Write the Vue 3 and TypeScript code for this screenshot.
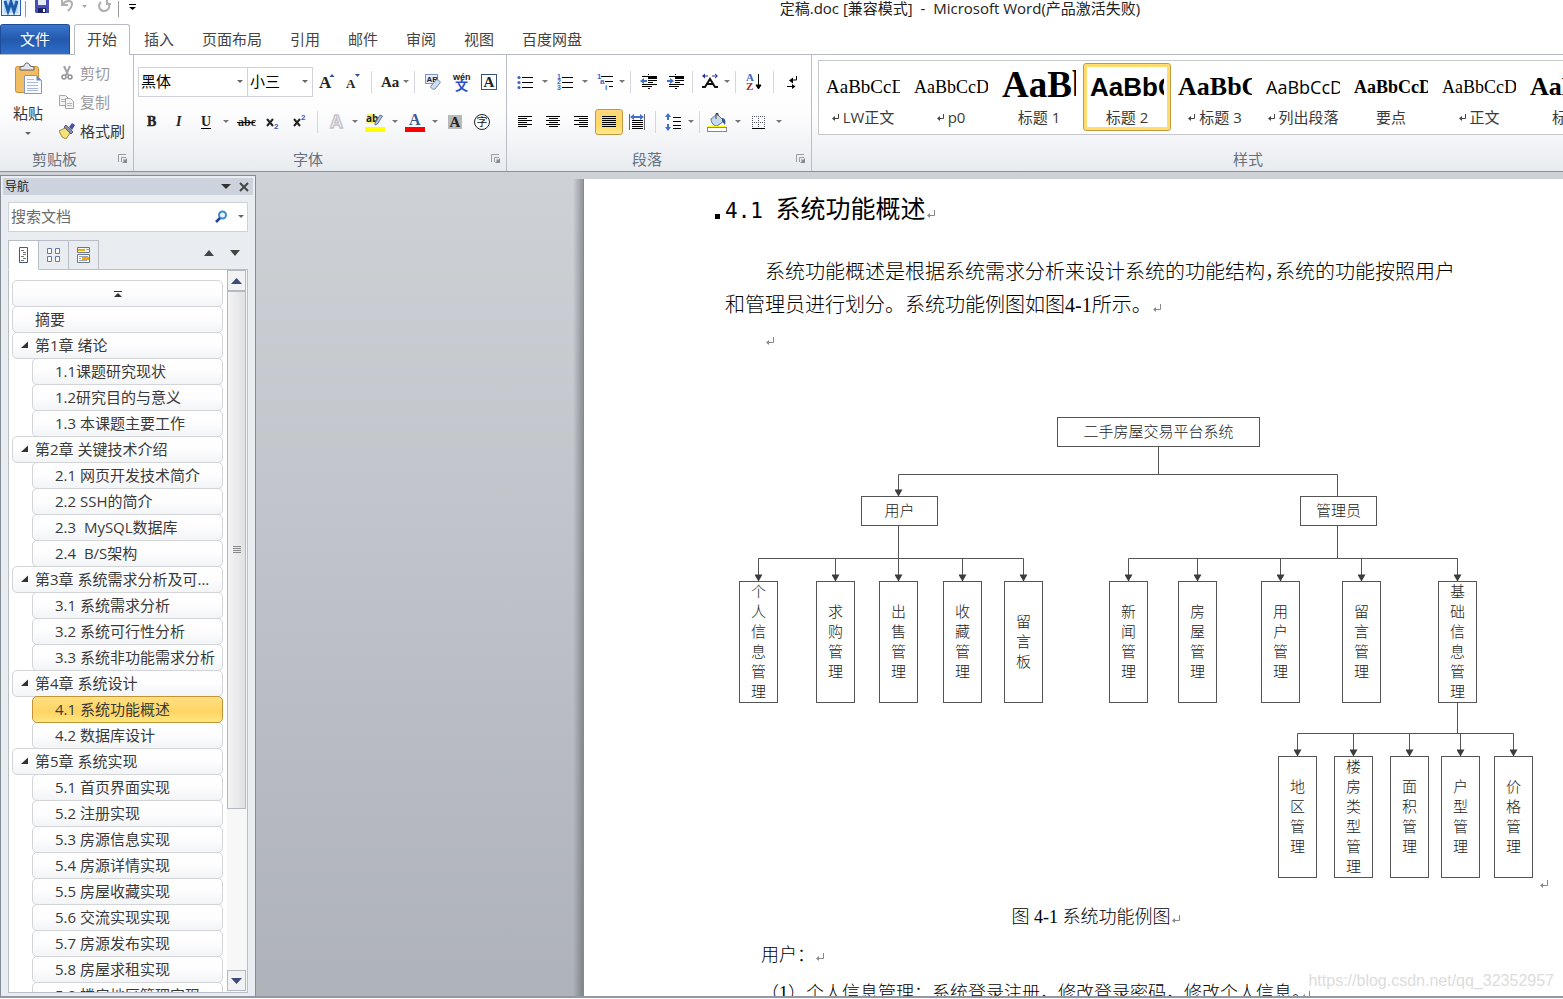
<script setup lang="ts">
import { ref } from 'vue'

interface Tool {
  icon?: string
  label?: string
  drop?: boolean
  tight?: boolean
  wide?: boolean
  active?: boolean
  sep?: boolean
}

const serif = 'font-family="Liberation Serif" fill="#222"'
const lines = (rows: number[][], color = '#000') =>
  rows.map(([x, y, w]) => `<rect x="${x}" y="${y}" width="${w}" height="1" fill="${color}"/>`).join('')

const icons: Record<string, string> = {
  grow: `<text x="4" y="18" font-size="17" font-weight="bold" ${serif}>A</text><path d="M14.500 7l2.500-3 2.500 3z" fill="#2f4f9f"/>`,
  shrink: `<text x="4" y="18" font-size="13" font-weight="bold" ${serif}>A</text><path d="M13 4h5l-2.500 3z" fill="#2f4f9f"/>`,
  case: `<text x="4" y="17" font-size="15" font-weight="bold" ${serif}>Aa</text>`,
  clear: `<rect x="4.500" y="4.500" width="12" height="9" fill="#e8eefb" stroke="#7f93c4"/><text x="5.500" y="12" font-size="8" font-weight="bold" font-family="Liberation Sans" fill="#223">AB</text><path d="M10 16l5-6c1-1 5 1 4 3l-5 6c-2 1-5-1-4-3z" fill="#d3deec" stroke="#6f87ab"/>`,
  pinyin: `<text x="3" y="10" font-size="9" font-weight="bold" font-family="Liberation Sans" fill="#222">wén</text><text x="5" y="20" font-size="13" font-weight="bold" font-family="Noto Sans CJK SC" fill="#2b50c8">文</text>`,
  charBorder: `<rect x="4.500" y="4.500" width="15" height="15" fill="#fff" stroke="#35517c"/><text x="6.500" y="17" font-size="15" font-weight="bold" ${serif}>A</text>`,
  bold: `<text x="7" y="16" font-size="14" font-weight="bold" stroke="#222" stroke-width=".4" ${serif}>B</text>`,
  italic: `<text x="9" y="16" font-size="14" font-weight="bold" font-style="italic" ${serif}>I</text>`,
  underline: `<text x="7" y="16" font-size="14" font-weight="bold" ${serif}>U</text><rect x="7" y="18" width="10" height="1"/>`,
  strike: `<text x="4" y="16" font-size="12" font-weight="bold" ${serif}>abc</text><rect x="3" y="12" width="18" height="1"/>`,
  sub: `<path d="M6 9l6 7M12 9l-6 7" stroke="#222" stroke-width="2"/><text x="13" y="19" font-size="8" font-weight="bold" font-family="Liberation Sans" fill="#2f5bb7">2</text>`,
  sup: `<path d="M6 9l6 7M12 9l-6 7" stroke="#222" stroke-width="2"/><text x="13" y="10" font-size="8" font-weight="bold" font-family="Liberation Sans" fill="#2f5bb7">2</text>`,
  effect: `<text x="7" y="18" font-size="18" font-weight="bold" font-family="Liberation Sans" fill="#fff" stroke="#c4c4cb" stroke-width="1.500">A</text>`,
  highlight: `<rect x="4" y="4" width="9" height="9" fill="#f5ee6d"/><text x="3" y="12" font-size="10" font-family="Open Sans" font-weight="bold" fill="#222">ab</text><path d="M12 13l5-8 2.500 1-5 8-2.500 1z" fill="#a9bfe2" stroke="#4c6288" stroke-width=".8"/><rect x="2" y="17" width="20" height="5" fill="#ff0"/>`,
  color: `<text x="6" y="15" font-size="16" font-weight="bold" font-family="Liberation Serif" fill="#3b5a94">A</text><rect x="2" y="17" width="20" height="5" fill="#f00"/>`,
  shade: `<rect x="5" y="5" width="14" height="14" fill="#b9b9b9"/><text x="6.500" y="17" font-size="15" font-weight="bold" ${serif}>A</text>`,
  circled: `<circle cx="12" cy="12" r="7.500" fill="#fff" stroke="#222" stroke-width="1"/><text x="6.500" y="16" font-size="11" font-family="Noto Sans CJK SC" fill="#111">字</text>`,
  bullets: lines([[9, 7, 11], [9, 12, 11], [9, 17, 11]]) + '<circle cx="6" cy="7.500" r="1.600" fill="#3c63c0"/><circle cx="6" cy="12.500" r="1.600" fill="#3c63c0"/><circle cx="6" cy="17.500" r="1.600" fill="#3c63c0"/>',
  numbers: lines([[9, 7, 11], [9, 12, 11], [9, 17, 11]]) + '<g font-size="7" font-weight="bold" font-family="Liberation Sans" fill="#3c63c0"><text x="4" y="9">1</text><text x="4" y="14">2</text><text x="4" y="20">3</text></g>',
  multi: lines([[8, 6, 12], [12, 11, 8], [16, 16, 4]]) + '<g font-size="8" font-weight="bold" font-family="Liberation Sans" fill="#3c63c0"><text x="4" y="9">1</text><text x="7" y="14">a</text><text x="12" y="20">i</text></g>',
  outdent: lines([[6, 6, 15], [12, 8, 9], [12, 10, 9], [12, 12, 5], [6, 14, 15], [6, 16, 10], [12, 18, 2]]) + '<rect x="12" y="7" width="9" height="2"/><path d="M4 11l4-3v2h3v2H8v2z" fill="#3f6fd0"/><path d="M12.500 4v16" stroke="#000" stroke-dasharray="1 1"/>',
  indent: lines([[6, 6, 15], [12, 8, 9], [12, 10, 9], [12, 12, 5], [6, 14, 15], [6, 16, 10], [12, 18, 2]]) + '<rect x="12" y="7" width="9" height="2"/><path d="M11 11l-4-3v2H4v2h3v2z" fill="#3f6fd0"/><path d="M12.500 4v16" stroke="#000" stroke-dasharray="1 1"/>',
  asian: '<path d="M4 17h3l5-8 5 8h3M8.500 14h7" fill="none" stroke="#111" stroke-width="2"/><path d="M4 6l3-2.500v5zM20 6l-3-2.500v5zM6 5.500h4v1H6zM14 5.500h4v1h-4z" fill="#22309a"/>',
  sort: `<g font-family="Liberation Serif" font-weight="bold" font-size="11"><text x="4" y="11" fill="#3c63c0">A</text><text x="4" y="20" fill="#9b3030">Z</text></g><path d="M16.500 4v14M14 15l2.500 4 2.500-4z" fill="#000" stroke="#000"/>`,
  marks: '<path d="M16.500 6v4H11M7 16.500h5" fill="none" stroke="#000"/><path d="M9 10.500l4-3v6zM12 14l3.500 2.500L12 19z"/>',
  left: lines([[5, 6, 14], [5, 8, 9], [5, 10, 14], [5, 12, 9], [5, 14, 14], [5, 16, 9]]),
  center: lines([[5, 6, 14], [8, 8, 9], [5, 10, 14], [8, 12, 9], [5, 14, 14], [8, 16, 9]]),
  right: lines([[5, 6, 14], [10, 8, 9], [5, 10, 14], [10, 12, 9], [5, 14, 14], [10, 16, 9]]),
  justify: lines([[5, 6, 14], [5, 8, 14], [5, 10, 14], [5, 12, 14], [5, 14, 14], [5, 16, 14]]),
  distribute: lines([[7, 10, 11], [7, 12, 11], [7, 14, 11], [7, 16, 11], [7, 18, 11]]) + '<path d="M4.500 4v16M19.500 4v16" stroke="#667"/><path d="M5 7l4-3v2h6V4l4 3-4 3V8H9v2z" fill="#3f6fd0"/>',
  spacing: lines([[12, 7, 8], [12, 11, 8], [12, 15, 8], [12, 18, 8]]) + '<path d="M7 3l3 4H8v3H6V7H4zM7 21l3-4H8v-3H6v3H4z" fill="#3f6fd0"/>',
  bucket: '<path d="M6 9l6-5 7 7-7 5c-3 0-6-3-6-7z" fill="#c9d8ee" stroke="#55729f"/><path d="M11 9V3.500h2V6" fill="none" stroke="#444"/><path d="M17 8c3 0 4 3 3 7l-3-4z" fill="#2c5688"/><rect x="3" y="16" width="17" height="1" fill="#ff0"/><rect x="2.500" y="17.500" width="19" height="4" fill="#fff" stroke="#888"/>',
  borders: '<path d="M6.500 6v12M12.500 6v12M18.500 6v12M6 6.500h13M6 12.500h13" stroke="#556" stroke-dasharray="1 1"/><rect x="6" y="18" width="13" height="1"/>',
}

const sep: Tool = { sep: true }
const fontTop: Tool[] = [
  { icon: 'grow', label: '增大字体' },
  { icon: 'shrink', label: '缩小字体' },
  sep,
  { icon: 'case', label: '更改大小写', drop: true, tight: true },
  sep,
  { icon: 'clear', label: '清除格式', wide: true },
  { icon: 'pinyin', label: '拼音指南' },
  { icon: 'charBorder', label: '字符边框' },
]
const fontBottom: Tool[] = [
  { icon: 'bold', label: '加粗' },
  { icon: 'italic', label: '倾斜' },
  { icon: 'underline', label: '下划线', drop: true },
  { icon: 'strike', label: '删除线' },
  { icon: 'sub', label: '下标' },
  { icon: 'sup', label: '上标' },
  sep,
  { icon: 'effect', label: '文本效果', drop: true },
  { icon: 'highlight', label: '突出显示', drop: true },
  { icon: 'color', label: '字体颜色', drop: true },
  { icon: 'shade', label: '字符底纹' },
  { icon: 'circled', label: '带圈字符' },
]
const paraTop: Tool[] = [
  { icon: 'bullets', label: '项目符号', drop: true },
  { icon: 'numbers', label: '编号', drop: true },
  { icon: 'multi', label: '多级列表', drop: true, tight: true },
  sep,
  { icon: 'outdent', label: '减少缩进量' },
  { icon: 'indent', label: '增加缩进量' },
  sep,
  { icon: 'asian', label: '中文版式', drop: true, tight: true },
  sep,
  { icon: 'sort', label: '排序', wide: true },
  sep,
  { icon: 'marks', label: '显示编辑标记', wide: true },
]
const paraBottom: Tool[] = [
  { icon: 'left', label: '左对齐' },
  { icon: 'center', label: '居中' },
  { icon: 'right', label: '右对齐' },
  { icon: 'justify', label: '两端对齐', active: true },
  { icon: 'distribute', label: '分散对齐' },
  sep,
  { icon: 'spacing', label: '行距', drop: true, tight: true },
  sep,
  { icon: 'bucket', label: '底纹', drop: true },
  { icon: 'borders', label: '边框', drop: true },
]
const toolRows = { font: [fontTop, fontBottom], para: [paraTop, paraBottom] }

const tabs = ['开始', '插入', '页面布局', '引用', '邮件', '审阅', '视图', '百度网盘']
const currentTab = ref('开始')

const styles = [
  { name: 'LW正文', mark: true, look: 'roman-l' },
  { name: 'p0', mark: true, look: 'roman' },
  { name: '标题 1', mark: false, look: 'h1' },
  { name: '标题 2', mark: false, look: 'h2' },
  { name: '标题 3', mark: true, look: 'h3' },
  { name: '列出段落', mark: true, look: 'sans' },
  { name: '要点', mark: false, look: 'strong' },
  { name: '正文', mark: true, look: 'roman' },
  { name: '标题', mark: false, look: 'h3' },
]
const currentStyle = ref('标题 2')

const outline = [
  { t: '摘要', level: 1 },
  { t: '第1章 绪论', level: 1, open: true },
  { t: '1.1课题研究现状', level: 2 },
  { t: '1.2研究目的与意义', level: 2 },
  { t: '1.3 本课题主要工作', level: 2 },
  { t: '第2章 关键技术介绍', level: 1, open: true },
  { t: '2.1 网页开发技术简介', level: 2 },
  { t: '2.2 SSH的简介', level: 2 },
  { t: '2.3  MySQL数据库', level: 2 },
  { t: '2.4  B/S架构', level: 2 },
  { t: '第3章 系统需求分析及可...', level: 1, open: true },
  { t: '3.1 系统需求分析', level: 2 },
  { t: '3.2 系统可行性分析', level: 2 },
  { t: '3.3 系统非功能需求分析', level: 2 },
  { t: '第4章 系统设计', level: 1, open: true },
  { t: '4.1 系统功能概述', level: 2 },
  { t: '4.2 数据库设计', level: 2 },
  { t: '第5章 系统实现', level: 1, open: true },
  { t: '5.1 首页界面实现', level: 2 },
  { t: '5.2 注册实现', level: 2 },
  { t: '5.3 房源信息实现', level: 2 },
  { t: '5.4 房源详情实现', level: 2 },
  { t: '5.5 房屋收藏实现', level: 2 },
  { t: '5.6 交流实现实现', level: 2 },
  { t: '5.7 房源发布实现', level: 2 },
  { t: '5.8 房屋求租实现', level: 2 },
  { t: '5.9 楼房地区管理实现', level: 2 },
]
const currentHeading = ref('4.1 系统功能概述')
const query = ref('')

// Module chart: horizontal boxes, then the vertical ones grouped by the row they hang from.
const wideNodes = [
  { t: '二手房屋交易平台系统', x: 332, y: 7, w: 202 },
  { t: '用户', x: 136, y: 86, w: 76 },
  { t: '管理员', x: 575, y: 86, w: 76 },
]
const tallNodes = [
  { t: '个人信息管理', cx: 33, y: 171 },
  { t: '求购管理', cx: 110, y: 171 },
  { t: '出售管理', cx: 173, y: 171 },
  { t: '收藏管理', cx: 237, y: 171 },
  { t: '留言板', cx: 298, y: 171 },
  { t: '新闻管理', cx: 403, y: 171 },
  { t: '房屋管理', cx: 472, y: 171 },
  { t: '用户管理', cx: 555, y: 171 },
  { t: '留言管理', cx: 636, y: 171 },
  { t: '基础信息管理', cx: 732, y: 171 },
  { t: '地区管理', cx: 572, y: 346 },
  { t: '楼房类型管理', cx: 628, y: 346 },
  { t: '面积管理', cx: 684, y: 346 },
  { t: '户型管理', cx: 735, y: 346 },
  { t: '价格管理', cx: 788, y: 346 },
]
const links =
  'M433 35V64M173 86V64H612V86M173 115V148M612 115V148M33 148H298M403 148H732M732 292V323M572 323H788'
</script>

<template>
  <div class="app">
    <header class="titlebar">
      <div class="quick">
        <svg class="q-logo" width="22" height="18" viewBox="0 0 22 18" aria-hidden="true">
          <rect x="1.500" y="-4" width="19" height="19.500" fill="#dcecfb" stroke="#2a62a8" />
          <rect x="4" y="-2" width="14" height="15" fill="#b5d6f4" />
          <path d="M5 1l3 10 3-9 3 9 3-10" fill="none" stroke="#1d5cab" stroke-width="3" />
        </svg>
        <i class="q-sep"></i>
        <button aria-label="保存">
          <svg width="16" height="18" viewBox="0 0 16 18"><path d="M1 -2h14v15H2l-1-1z" fill="#4a4fb5" /><path d="M4 -2h8v7H4z" fill="#e6ebf8" /><path d="M4 8h8v5H4z" fill="#1c2266" /><path d="M9 9h2v3H9z" fill="#fff" /></svg>
        </button>
        <button aria-label="撤消">
          <svg width="16" height="18" viewBox="0 0 16 18"><path d="M5 -1v6h6M6 4c3-4 9-4 9 0 0 3-2 5-4 7" fill="none" stroke="#b0b0b3" stroke-width="2" /></svg>
        </button>
        <svg width="8" height="18" viewBox="0 0 8 18" aria-hidden="true"><path d="M2 5h5L4.500 8z" fill="#aaa" /></svg>
        <button aria-label="恢复">
          <svg width="16" height="18" viewBox="0 0 16 18"><path d="M12 -1v5h4M6 2c-4 4-1 9 3 9s7-4 4-8" fill="none" stroke="#b0b0b3" stroke-width="2" /></svg>
        </button>
        <i class="q-sep"></i>
        <button aria-label="自定义快速访问工具栏">
          <svg width="10" height="18" viewBox="0 0 10 18"><path d="M2 4h7v1H2zM2 7h7L5.500 10z" /></svg>
        </button>
      </div>
      <h1 class="title">定稿.doc [兼容模式]&nbsp; - &nbsp;Microsoft Word(产品激活失败)</h1>
    </header>

    <nav class="tabs">
      <button class="file">文件</button>
      <button
        v-for="t in tabs"
        :key="t"
        class="tab"
        :class="{ on: t === currentTab }"
        @click="currentTab = t"
      >{{ t }}</button>
    </nav>

    <section class="ribbon">
      <div class="group">
        <div class="clip">
          <button class="paste">
            <svg width="30" height="34" viewBox="0 0 30 34">
              <rect x="2.500" y="4.500" width="23" height="26" rx="2" fill="#f0bd62" stroke="#c98f38" />
              <path d="M7 8V5l4-1c1-4 5-4 6 0l4 1v3z" fill="#e4e6ea" stroke="#5c636e" />
              <path d="M11.500 13.500h12l5 5v13h-17z" fill="#f7faff" stroke="#8397bb" />
              <path d="M23.500 13.500v5h5z" fill="#6b83b5" />
              <path d="M14 17.500h7M14 20.500h11M14 23.500h11M14 26.500h11M14 28.500h11" stroke="#a9b9d6" />
            </svg>
            <span>粘贴</span>
            <svg class="caret" width="6" height="4" viewBox="0 0 6 4"><path d="M0 0h6L3 3z" fill="#666" /></svg>
          </button>
          <div class="clip-list">
            <button class="off">
              <svg width="16" height="16" viewBox="0 0 16 16"><path d="M5 1l4 9M11 1L7 10" stroke="#a4a4a8" stroke-width="2" /><circle cx="5" cy="12" r="2" fill="none" stroke="#909094" stroke-width="1.500" /><circle cx="11" cy="12" r="2" fill="none" stroke="#909094" stroke-width="1.500" /></svg>
              剪切
            </button>
            <button class="off">
              <svg width="16" height="16" viewBox="0 0 16 16"><path d="M.5 1.500h6l3 3v7h-9z" fill="#f2f2f3" stroke="#a6a6aa" /><path d="M6.500 4.500h5l3 3v7h-8z" fill="#f2f2f3" stroke="#a6a6aa" /><path d="M2 5.500h4M2 7.500h4M8 9.500h5M8 11.500h5" stroke="#b5b5b9" /></svg>
              复制
            </button>
            <button>
              <svg width="16" height="16" viewBox="0 0 16 16"><path d="M0 8l6-3 5 5-4 6-4-2z" fill="#f3e07f" stroke="#a08a35" /><path d="M5 4l2-2 7 7-2 2z" fill="#8c8fae" stroke="#555a80" /><path d="M10 4l3-4 3 2-3 5z" fill="#4b4fa3" /></svg>
              格式刷
            </button>
          </div>
        </div>
        <div class="group-name">
          剪贴板
          <svg class="launch" width="10" height="10" viewBox="0 0 10 10"><path d="M.5 8V.5H8M3.500 8V3.500H8" fill="none" stroke="#999ca2" /><path d="M9 4v5H4l2-2-1-1 1-1 1 1z" fill="#888b92" /></svg>
        </div>
      </div>

      <div v-for="(rows, key) in toolRows" :key="key" class="group">
        <div class="tools">
          <div v-for="(row, r) in rows" :key="r" class="row" :class="{ aligned: key === 'para' && r === 1 }">
            <template v-if="key === 'font' && r === 0">
              <label class="combo family">
                <select aria-label="字体"><option>黑体</option></select>
                <svg class="caret" width="6" height="4" viewBox="0 0 6 4"><path d="M0 0h6L3 3z" fill="#666" /></svg>
              </label>
              <label class="combo size">
                <select aria-label="字号"><option>小三</option></select>
                <svg class="caret" width="6" height="4" viewBox="0 0 6 4"><path d="M0 0h6L3 3z" fill="#666" /></svg>
              </label>
            </template>
            <template v-for="(b, i) in row" :key="i">
              <i v-if="b.sep" class="sep"></i>
              <button v-else class="tool" :class="{ wide: b.wide, on: b.active }" :aria-label="b.label">
                <svg width="24" height="24" viewBox="0 0 24 24" v-html="icons[b.icon ?? '']"></svg>
              </button>
              <button v-if="b.drop" class="drop" :class="{ tight: b.tight }" :aria-label="b.label + '选项'">
                <svg width="6" height="4" viewBox="0 0 6 4"><path d="M0 0h6L3 3z" fill="#777" /></svg>
              </button>
            </template>
          </div>
        </div>
        <div class="group-name">
          {{ key === 'font' ? '字体' : '段落' }}
          <svg class="launch" width="10" height="10" viewBox="0 0 10 10"><path d="M.5 8V.5H8M3.500 8V3.500H8" fill="none" stroke="#999ca2" /><path d="M9 4v5H4l2-2-1-1 1-1 1 1z" fill="#888b92" /></svg>
        </div>
      </div>

      <div class="group styles">
        <div class="gallery">
          <button
            v-for="s in styles"
            :key="s.name"
            class="style"
            :class="{ on: s.name === currentStyle }"
            @click="currentStyle = s.name"
          >
            <span class="preview" :class="s.look">AaBbCcDd</span>
            <span class="style-name">
              <svg v-if="s.mark" width="7" height="8" viewBox="0 0 7 8"><path d="M6.500 1v4.500H2" fill="none" stroke="#444" /><path d="M0 5.500L3 3v5z" fill="#444" /></svg>
              {{ s.name }}
            </span>
          </button>
        </div>
        <div class="group-name">样式</div>
      </div>
    </section>

    <main class="work">
      <aside class="pane">
        <div class="pane-head">
          <span>导航</span>
          <button aria-label="任务窗格选项"><svg width="10" height="6" viewBox="0 0 10 6"><path d="M0 0h10L5 5z" fill="#333" /></svg></button>
          <button aria-label="关闭"><svg width="10" height="10" viewBox="0 0 10 10"><path d="M1 1l8 8M9 1L1 9" stroke="#444" stroke-width="2" /></svg></button>
        </div>
        <div class="search">
          <input v-model="query" type="text" placeholder="搜索文档" aria-label="搜索文档" />
          <button aria-label="搜索"><svg width="14" height="14" viewBox="0 0 14 14"><circle cx="8.500" cy="5" r="3.500" fill="#eaf5ff" stroke="#3b8ccc" stroke-width="2" /><path d="M6 8l-4 4" stroke="#27408f" stroke-width="2.500" /></svg></button>
          <button aria-label="搜索选项"><svg width="6" height="4" viewBox="0 0 6 4"><path d="M0 0h6L3 3z" fill="#666" /></svg></button>
        </div>
        <div class="views">
          <button class="view on" aria-label="浏览标题">
            <svg width="16" height="16" viewBox="0 0 16 16"><path d="M3.500.5h8v15h-8z" fill="#fff" stroke="#4a5878" /><path d="M5 3.500h3M7 5.500h3M7 7.500h3M5 9.500h3M7 11.500h3M5 13.500h3" stroke="#777" /></svg>
          </button>
          <button class="view" aria-label="浏览页面">
            <svg width="16" height="16" viewBox="0 0 16 16"><path d="M1.500 1.500h4v5h-4zM9.500 1.500h4v5h-4zM1.500 9.500h4v5h-4zM9.500 9.500h4v5h-4z" fill="#fff" stroke="#6478a8" /></svg>
          </button>
          <button class="view" aria-label="浏览搜索结果">
            <svg width="16" height="16" viewBox="0 0 16 16"><path d="M1.500.5h12v5h-12zM1.500 7.500h12v8h-12z" fill="#fff" stroke="#6a7590" /><path d="M2 2h7v2H2zM6 10h7v3H6z" fill="#f5a800" /><path d="M10 2.500h3M3 9.500h9M3 11.500h2M3 13.500h8" stroke="#9aa2b5" /></svg>
          </button>
          <span class="fill"></span>
          <button class="step" aria-label="上一个标题"><svg width="10" height="6" viewBox="0 0 10 6"><path d="M0 6h10L5 0z" fill="#444" /></svg></button>
          <button class="step" aria-label="下一个标题"><svg width="10" height="6" viewBox="0 0 10 6"><path d="M0 0h10L5 6z" fill="#444" /></svg></button>
        </div>
        <div class="outline">
          <div class="list">
            <button class="entry top" aria-label="跳转到开头">
              <svg width="8" height="8" viewBox="0 0 8 8"><path d="M0 1h8v1H0zM0 7h8L4 3z" fill="#333" /></svg>
            </button>
            <button
              v-for="h in outline"
              :key="h.t"
              class="entry"
              :class="{ child: h.level === 2, on: h.t === currentHeading }"
              @click="currentHeading = h.t"
            >
              <svg v-if="h.open" class="twist" width="8" height="8" viewBox="0 0 8 8"><path d="M7 .5V7H0z" fill="#333" /></svg>
              <span>{{ h.t }}</span>
            </button>
          </div>
          <div class="scroll">
            <button class="arrow" aria-label="向上滚动"><svg width="11" height="6" viewBox="0 0 11 6"><path d="M0 6h11L5.500 0z" fill="#3d4a78" /></svg></button>
            <div class="thumb"><i></i></div>
            <div class="track"></div>
            <button class="arrow" aria-label="向下滚动"><svg width="11" height="6" viewBox="0 0 11 6"><path d="M0 0h11L5.500 6z" fill="#3d4a78" /></svg></button>
          </div>
        </div>
      </aside>

      <div class="canvas">
        <article class="page">
          <h2 class="heading"><span class="half">4.1 </span>系统功能概述<svg class="ret" width="8" height="8" viewBox="0 0 8 8"><path d="M7.500 0v5.500H2" fill="none" stroke="#888" /><path d="M0 5.500L3 3v5z" fill="#888" /></svg></h2>
          <p class="body">系统功能概述是根据系统需求分析来设计系统的功能结构<span class="comma">，</span>系统的功能按照用户和管理员进行划分。系统功能例图如图<span class="half">4-1</span>所示。<svg class="ret" width="8" height="8" viewBox="0 0 8 8"><path d="M7.500 0v5.500H2" fill="none" stroke="#888" /><path d="M0 5.500L3 3v5z" fill="#888" /></svg></p>
          <p class="body"><svg class="ret" width="8" height="8" viewBox="0 0 8 8"><path d="M7.500 0v5.500H2" fill="none" stroke="#888" /><path d="M0 5.500L3 3v5z" fill="#888" /></svg></p>

          <svg class="chart" width="830" height="480" viewBox="0 0 830 480" role="img" aria-label="系统功能例图">
            <defs>
              <marker id="tip" markerWidth="10" markerHeight="9" refX="4" refY="8" markerUnits="userSpaceOnUse">
                <path d="M0 1h8L4 8z" fill="#3c3c3c" />
              </marker>
            </defs>
            <g transform="translate(.5 .5)">
              <path :d="links" class="link" />
              <path d="M173 70V86" class="link" marker-end="url(#tip)" />
              <g v-for="n in tallNodes" :key="n.t + n.y">
                <path :d="`M${n.cx} ${n.y - 23}v23`" class="link" marker-end="url(#tip)" />
                <rect class="node" :x="n.cx - 19" :y="n.y" width="38" height="121" />
                <text
                  v-for="(c, i) in n.t.split('')"
                  :key="i"
                  class="glyph"
                  :x="n.cx"
                  :y="n.y + 75 + (i - n.t.length / 2) * 20"
                >{{ c }}</text>
              </g>
              <g v-for="n in wideNodes" :key="n.t">
                <rect class="node" :x="n.x" :y="n.y" :width="n.w" height="29" />
                <text class="glyph" :x="n.x + n.w / 2" :y="n.y + 19">{{ n.t }}</text>
              </g>
            </g>
            <g transform="translate(815 470)"><path d="M7.500 0v5.500H2" fill="none" stroke="#888" /><path d="M0 5.500L3 3v5z" fill="#888" /></g>
          </svg>

          <p class="caption">图<span class="half"> 4-1 </span>系统功能例图<svg class="ret" width="8" height="8" viewBox="0 0 8 8"><path d="M7.500 0v5.500H2" fill="none" stroke="#888" /><path d="M0 5.500L3 3v5z" fill="#888" /></svg></p>
          <p class="item">用户：<svg class="ret" width="8" height="8" viewBox="0 0 8 8"><path d="M7.500 0v5.500H2" fill="none" stroke="#888" /><path d="M0 5.500L3 3v5z" fill="#888" /></svg></p>
          <p class="item">（<span class="half">1</span>）个人信息管理：系统登录注册，修改登录密码，修改个人信息<span class="comma">。</span><svg class="ret" width="8" height="8" viewBox="0 0 8 8"><path d="M7.500 0v5.500H2" fill="none" stroke="#888" /><path d="M0 5.500L3 3v5z" fill="#888" /></svg></p>
        </article>
        <span class="watermark">https://blog.csdn.net/qq_32352957</span>
      </div>
    </main>
  </div>
</template>

<style>
html,
body {
  background: #fff;
  overflow: hidden;
}
</style>

<style scoped>
.app {
  display: flex;
  flex-direction: column;
  height: 100vh;
  box-sizing: border-box;
  padding-bottom: 1px;
  overflow: hidden;
  font: 15px/20px "Open Sans", "Noto Sans CJK SC", sans-serif;
  color: #3a3a3a;
  background: #fff;
}
.app * {
  box-sizing: border-box;
}
button,
select,
input {
  margin: 0;
  padding: 0;
  border: 0;
  border-radius: 0;
  background: none;
  color: inherit;
  font: inherit;
}
svg {
  display: block;
  flex: none;
}
h1,
h2,
p {
  margin: 0;
}

.titlebar {
  display: flex;
  flex: none;
  height: 24px;
  padding-bottom: 6px;
}
.quick {
  display: flex;
  align-items: center;
  gap: 7px;
  width: 140px;
}
.quick .q-logo {
  margin-right: -4px;
}
.quick > * {
  flex: none;
}
.q-sep {
  width: 1px;
  height: 16px;
  background: #999;
  margin-right: 1px;
}
.title {
  flex: 1;
  padding-left: 217px;
  text-align: center;
  font-size: 15px;
  font-weight: 400;
  line-height: 16px;
  color: #222;
  white-space: nowrap;
}

.tabs {
  display: flex;
  flex: none;
  height: 31px;
  border-bottom: 1px solid #b7bac1;
}
.file {
  width: 70px;
  margin-right: 4px;
  padding-bottom: 2px;
  color: #fff;
  border: 1px solid #1e4d9b;
  border-bottom: 0;
  border-radius: 3px 3px 0 0;
  background: linear-gradient(#3a75cc, #2359ad 50%, #2f6fca);
}
.tab {
  padding: 0 14px;
  color: #444;
}
.tab.on {
  margin-bottom: -1px;
  padding: 0 12px 3px;
  border: 1px solid #b7bac1;
  border-bottom: 0;
  border-radius: 3px 3px 0 0;
  background: #fff;
}

.ribbon {
  display: flex;
  flex: none;
  height: 117px;
  overflow: hidden;
  border-bottom: 1px solid #8b9097;
  background: linear-gradient(#fff, #fdfdfe 50%, #e8ebef);
}
.group {
  display: flex;
  flex: none;
  flex-direction: column;
  border-right: 1px solid #babdc5;
}
.group-name {
  position: relative;
  height: 24px;
  padding-right: 24px;
  line-height: 24px;
  text-align: center;
  color: #66717f;
}
.launch {
  position: absolute;
  right: 5px;
  top: 7px;
}
.clip {
  display: flex;
  height: 92px;
  padding-right: 8px;
}
.paste {
  display: flex;
  flex-direction: column;
  align-items: center;
  width: 59px;
  padding: 7px 3px 0 0;
}
.paste span {
  margin: 7px 0 9px;
}
.clip-list {
  padding-top: 3px;
}
.clip-list button {
  display: flex;
  align-items: center;
  gap: 5px;
  height: 29px;
}
.off {
  color: #9a9a9e;
}
.tools {
  display: flex;
  flex-direction: column;
  gap: 10px;
  height: 92px;
  padding: 12px 4px 0;
}
.row {
  display: flex;
  align-items: center;
  height: 30px;
}
.tool {
  display: flex;
  align-items: center;
  justify-content: center;
  width: 27px;
  height: 26px;
}
.tool.wide {
  width: 30px;
}
.aligned .tool {
  width: 28px;
}
.tool.on {
  border: 1px solid #c29a44;
  border-radius: 3px;
  background: linear-gradient(#fdd77a, #ffd866 60%, #ffe98b);
}
.drop {
  display: flex;
  align-items: center;
  justify-content: center;
  width: 13px;
  height: 26px;
}
.drop.tight {
  width: 8px;
}
.sep {
  width: 8px;
  height: 22px;
  background: linear-gradient(#d5d7dc, #d5d7dc) center / 1px 100% no-repeat;
}
.combo {
  display: flex;
  align-items: center;
  position: relative;
  height: 30px;
  border: 1px solid #d0d2d8;
  background: #fff;
  color: #000;
}
.combo select {
  width: 100%;
  height: 28px;
  padding: 0 0 2px 2px;
  appearance: none;
}
.combo .caret {
  position: absolute;
  right: 4px;
}
.family {
  width: 110px;
}
.size {
  width: 66px;
  margin-left: -1px;
}

.styles {
  width: 890px;
  padding-left: 6px;
  border: 0;
}
.gallery {
  display: flex;
  height: 75px;
  margin: 5px 0 12px;
  padding-top: 2px;
  border: 1px solid #c6c8cd;
  background: #fff;
}
.style {
  flex: none;
  width: 88px;
  height: 68px;
  padding: 0 6px;
  border: 1px solid transparent;
}
.style.on {
  border-color: #c29a44;
  border-radius: 3px;
  box-shadow: inset 0 0 0 3px #ffdc6e;
}
.preview {
  display: block;
  width: 74px;
  height: 40px;
  overflow: hidden;
  text-align: left;
  line-height: 46px;
  color: #000;
  font-family: "Liberation Serif", serif;
  font-size: 18px;
}
.roman-l {
  font-size: 19px;
}
.h1 {
  font-size: 37px;
  font-weight: 700;
  line-height: 42px;
}
.h2 {
  font-family: "Liberation Sans", sans-serif;
  font-size: 26px;
  font-weight: 700;
}
.h3 {
  font-size: 26px;
  font-weight: 700;
}
.sans {
  font-family: "Open Sans", sans-serif;
}
.strong {
  font-weight: 700;
}
.style-name {
  display: flex;
  align-items: center;
  justify-content: center;
  gap: 4px;
  height: 26px;
  white-space: nowrap;
}

.work {
  display: flex;
  flex: 1;
  min-height: 0;
  border-bottom: 2px solid #9299a6;
  background: linear-gradient(#ced1d6, #aeb2b9);
}
.pane {
  display: flex;
  flex: none;
  flex-direction: column;
  width: 256px;
  margin-top: 3px;
  padding: 2px 7px 3px;
  border: 1px solid #868c96;
  border-bottom: 0;
  background: #e9ecf1;
}
.pane-head {
  display: flex;
  align-items: center;
  gap: 8px;
  height: 17px;
  margin: 0 -5px;
  padding: 0 4px 0 2px;
  font-size: 12px;
  background: #ccd3dc;
  color: #222;
}
.pane-head span {
  flex: 1;
}
.search {
  display: flex;
  align-items: center;
  flex: none;
  height: 30px;
  margin-top: 7px;
  padding: 0 3px 0 2px;
  gap: 10px;
  border: 1px solid #cdd1d8;
  background: #fff;
}
.search input {
  flex: 1;
  min-width: 0;
  height: 26px;
  padding-bottom: 3px;
  outline: 0;
}
.search input::placeholder {
  color: #6b6b6b;
  opacity: 1;
}
.views {
  display: flex;
  flex: none;
  height: 30px;
  margin: 8px 0 -1px;
  padding-right: 8px;
}
.view {
  display: flex;
  align-items: center;
  justify-content: center;
  width: 31px;
  margin-right: -1px;
  border: 1px solid #b9bdc6;
}
.view.on {
  position: relative;
  border-bottom-color: #fff;
  background: #fff;
}
.fill {
  flex: 1;
}
.step {
  width: 10px;
  margin-left: 16px;
  padding-bottom: 4px;
}
.outline {
  display: flex;
  flex: 1;
  min-height: 0;
  border: 1px solid #b9bdc6;
  background: #fff;
}
.list {
  flex: 1;
  min-width: 0;
  overflow: hidden;
  padding: 10px 4px 0 3px;
}
.entry {
  display: flex;
  align-items: center;
  position: relative;
  width: 100%;
  height: 27px;
  margin-bottom: -1px;
  padding: 0 0 2px 22px;
  border: 1px solid #d3d5d9;
  border-radius: 5px;
  background: linear-gradient(#fff, #fdfdfe 50%, #f2f4f6);
  white-space: pre;
}
.entry.child {
  width: calc(100% - 20px);
  margin-left: 20px;
}
.entry.top {
  justify-content: center;
  padding: 1px 0 0;
}
.entry.on {
  z-index: 1;
  border-color: #c29436;
  background: linear-gradient(#ffdf80, #ffd564 60%, #ffe87e);
}
.twist {
  position: absolute;
  left: 8px;
}
.scroll {
  display: flex;
  flex-direction: column;
  width: 20px;
  padding: 0 1px 1px 0;
  background: #f7f7f8;
}
.arrow {
  display: flex;
  align-items: center;
  justify-content: center;
  height: 21px;
  border: 1px solid #b4b8c0;
  background: #f1f2f4;
}
.thumb {
  display: flex;
  flex: 518;
  align-items: center;
  justify-content: center;
  border: 1px solid #b4b8c0;
  background: linear-gradient(90deg, #f4f4f5, #e0e1e4);
}
.thumb i {
  width: 8px;
  height: 8px;
  background: repeating-linear-gradient(#888 0 1px, transparent 1px 2px);
}
.track {
  flex: 162;
}

.canvas {
  position: relative;
  flex: 1;
  min-width: 0;
  padding: 7px 0 0 327px;
  overflow: hidden;
}
.page {
  position: relative;
  min-height: 100%;
  padding: 9px 97px 0 142px;
  background: #fff;
  font-family: "Noto Sans CJK SC", sans-serif;
  font-weight: 300;
  color: #000;
}
.page::before {
  content: "";
  position: absolute;
  top: 0;
  bottom: 0;
  left: -10px;
  width: 10px;
  border-right: 1px solid #858a90;
  background: linear-gradient(90deg, transparent, rgba(70, 75, 82, 0.45));
}
.ret {
  display: inline-block;
  margin-left: 1px;
}
.half {
  font-family: "Liberation Serif", serif;
  line-height: 1;
  white-space: pre;
}
.heading {
  position: relative;
  height: 40px;
  font-size: 25px;
  line-height: 38px;
  font-weight: 400;
  white-space: pre;
}
.heading::before {
  content: "";
  position: absolute;
  left: -10px;
  top: 26px;
  width: 5px;
  height: 5px;
  background: #000;
}
.heading .half {
  font-family: "DejaVu Sans Mono", monospace;
  font-size: 21px;
}
.body {
  font-size: 20px;
  line-height: 33px;
  text-indent: 2em;
}
.heading + .body {
  margin-top: 26px;
}
.comma {
  font-feature-settings: "halt";
}
.chart {
  margin: 57px 0 9px;
  overflow: visible;
}
.link {
  fill: none;
  stroke: #555;
}
.node {
  fill: #fff;
  stroke: #555;
}
.glyph {
  font-size: 15px;
  text-anchor: middle;
  fill: #222;
}
.caption {
  font-size: 18px;
  line-height: 33px;
  text-align: center;
}
.item {
  margin-top: 5px;
  font-size: 18px;
  line-height: 33px;
  text-indent: 2em;
  white-space: nowrap;
}
.watermark {
  position: absolute;
  right: 9px;
  bottom: 5px;
  font-family: "Liberation Sans", sans-serif;
  font-size: 16px;
  line-height: 20px;
  color: #dcdcdc;
}
</style>
